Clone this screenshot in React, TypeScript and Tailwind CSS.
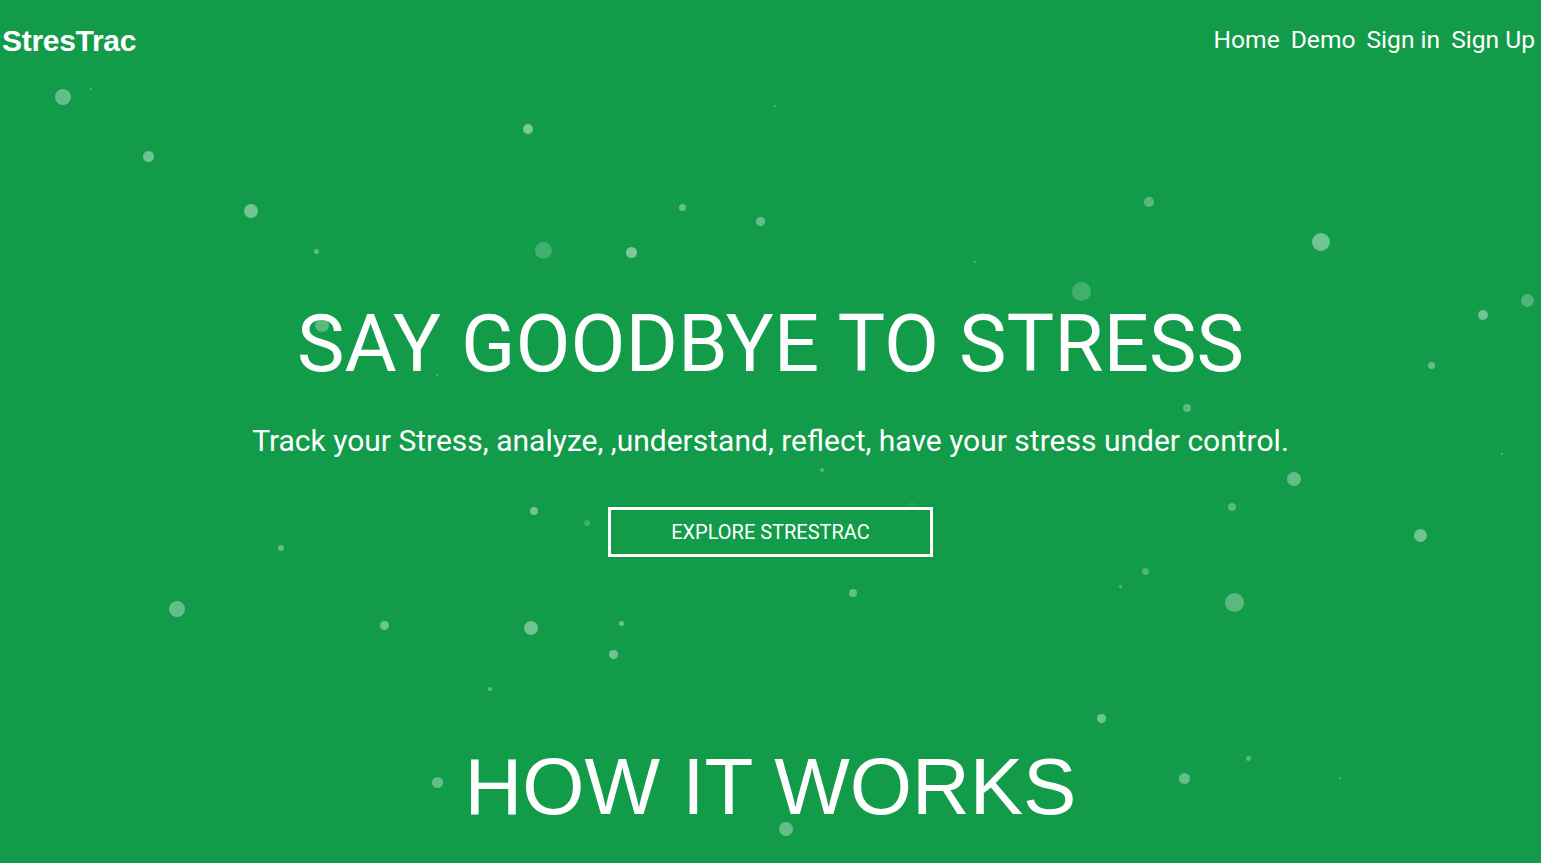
import React from 'react';

interface Dot {
    x: number;
    y: number;
    s: number;
    o: number;
}

// particle positions, roughly as they appear in the hero background
const dots: Dot[] = [
    { x: 63, y: 97, s: 16, o: 0.35 },
    { x: 91, y: 89, s: 2, o: 0.3 },
    { x: 148, y: 156, s: 11, o: 0.4 },
    { x: 251, y: 211, s: 14, o: 0.4 },
    { x: 316, y: 251, s: 5, o: 0.35 },
    { x: 322, y: 325, s: 14, o: 0.3 },
    { x: 528, y: 129, s: 10, o: 0.45 },
    { x: 543, y: 250, s: 17, o: 0.2 },
    { x: 631, y: 252, s: 11, o: 0.45 },
    { x: 682, y: 207, s: 7, o: 0.35 },
    { x: 760, y: 221, s: 9, o: 0.35 },
    { x: 775, y: 106, s: 2, o: 0.3 },
    { x: 975, y: 262, s: 2, o: 0.3 },
    { x: 1149, y: 202, s: 10, o: 0.3 },
    { x: 1321, y: 242, s: 18, o: 0.4 },
    { x: 1081, y: 291, s: 19, o: 0.2 },
    { x: 1483, y: 315, s: 10, o: 0.4 },
    { x: 1527, y: 300, s: 13, o: 0.25 },
    { x: 1431, y: 365, s: 7, o: 0.35 },
    { x: 1187, y: 408, s: 8, o: 0.3 },
    { x: 1294, y: 479, s: 14, o: 0.35 },
    { x: 1232, y: 507, s: 8, o: 0.3 },
    { x: 1420, y: 535, s: 13, o: 0.4 },
    { x: 1502, y: 454, s: 2, o: 0.3 },
    { x: 1145, y: 571, s: 7, o: 0.25 },
    { x: 1120, y: 586, s: 3, o: 0.3 },
    { x: 1234, y: 602, s: 19, o: 0.3 },
    { x: 853, y: 593, s: 8, o: 0.35 },
    { x: 822, y: 470, s: 4, o: 0.3 },
    { x: 912, y: 504, s: 2, o: 0.3 },
    { x: 437, y: 375, s: 2, o: 0.3 },
    { x: 534, y: 511, s: 8, o: 0.4 },
    { x: 587, y: 523, s: 6, o: 0.2 },
    { x: 281, y: 548, s: 6, o: 0.35 },
    { x: 177, y: 609, s: 16, o: 0.35 },
    { x: 384, y: 625, s: 9, o: 0.4 },
    { x: 531, y: 628, s: 14, o: 0.4 },
    { x: 621, y: 623, s: 5, o: 0.4 },
    { x: 613, y: 654, s: 9, o: 0.4 },
    { x: 490, y: 689, s: 4, o: 0.35 },
    { x: 1101, y: 718, s: 9, o: 0.4 },
    { x: 1248, y: 758, s: 5, o: 0.3 },
    { x: 1340, y: 778, s: 2, o: 0.3 },
    { x: 437, y: 782, s: 11, o: 0.35 },
    { x: 786, y: 829, s: 14, o: 0.35 },
    { x: 1184, y: 778, s: 11, o: 0.35 },
];

function Particles() {
    return (
        <div className="absolute inset-0 pointer-events-none">
            {dots.map((d, i) => (
                <span
                    key={i}
                    className="absolute rounded-full bg-white"
                    style={{
                        left: d.x - d.s / 2,
                        top: d.y - d.s / 2,
                        width: d.s,
                        height: d.s,
                        opacity: d.o,
                    }}
                />
            ))}
        </div>
    );
}

export default function App() {
    return (
        <div className="relative w-full h-[863px] overflow-hidden bg-[#129c4a] text-white font-['Roboto',sans-serif]">
            <Particles />

            {/* Navbar */}
            <nav className="relative flex items-center justify-between h-[81px] pl-[2px] pr-[6px]">
                <a className="font-['Liberation_Sans',Arial,sans-serif] font-bold text-[30px] tracking-[-0.3px]">
                    StresTrac
                </a>
                <ul className="flex gap-[11px] text-[24.6px]">
                    <li>Home</li>
                    <li>Demo</li>
                    <li>Sign in</li>
                    <li>Sign Up</li>
                </ul>
            </nav>

            {/* Hero */}
            <section className="relative flex flex-col items-center pt-[213px]">
                <h1 className="text-[80px] leading-[100px]">SAY GOODBYE TO STRESS</h1>
                <p className="mt-[29px] text-[30px] leading-[36px]">
                    Track your Stress, analyze, ,understand, reflect, have your stress under control.
                </p>
                <button className="mt-[48px] w-[325px] h-[50px] border-[3px] border-white text-[20px] leading-none">
                    EXPLORE STRESTRAC
                </button>
            </section>

            <section className="relative flex justify-center pt-[180px]">
                <h2 className="font-['Liberation_Sans',Arial,sans-serif] text-[80px] leading-[100px]">HOW IT WORKS</h2>
            </section>
        </div>
    );
}
